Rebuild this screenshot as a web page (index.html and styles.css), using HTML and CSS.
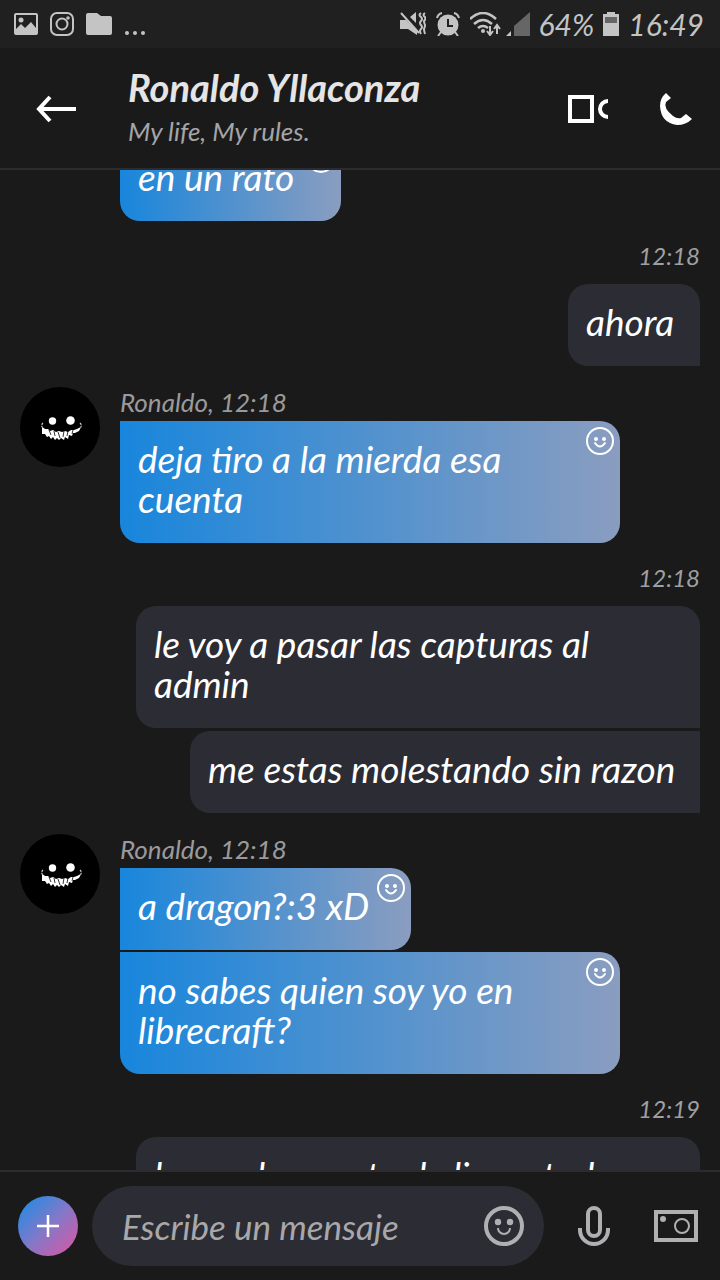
FILE: index.html
```html
<!DOCTYPE html>
<html lang="es">
<head>
<meta charset="utf-8">
<meta name="viewport" content="width=device-width, initial-scale=1">
<title>Ronaldo Yllaconza</title>
<link rel="stylesheet" href="styles.css">
</head>
<body>
<svg class="defs" aria-hidden="true">
  <symbol id="smile" viewBox="0 0 28 28">
    <circle cx="14" cy="14" r="13" fill="none" stroke="currentColor" stroke-width="2"/>
    <circle cx="10" cy="12" r="2" fill="currentColor"/><circle cx="18" cy="12" r="2" fill="currentColor"/>
    <path d="M9 16q5 7 10 0" fill="none" stroke="currentColor" stroke-width="2" stroke-linecap="round"/>
  </symbol>
  <symbol id="grin" viewBox="0 0 80 80">
    <circle cx="40" cy="40" r="40" fill="#000"/>
    <circle cx="32.500" cy="34" r="3.700" fill="#fff"/><circle cx="50.500" cy="33.500" r="4.300" fill="#fff"/>
    <path d="M23 36q-3 3 1 6M60 36q3 3-1 6" fill="none" stroke="#ccc" stroke-width="1.200" stroke-dasharray="2 1"/>
    <path d="M22 40l3 2 3 0 2 2 3-1 3 2 3-1 3 1 3-1 3 1 3-2 3 0 3-1 4-2-2 4-4 2-2 0-1 3-3-1-1 4-3-2-1 3-3-2-2 2-2-2-2 2-2-3-2 2-2-3-2 1-2-3-3 0z" fill="#fff"/>
    <path d="M29 43l2 5M34 44l1 5M38 45l2 6M43 50l1-6M47 49l1-5M52 47l1-4" stroke="#000" stroke-width=".8"/>
  </symbol>
</svg>
<div class="app">
  <div class="status">
    <div class="status-left">
      <svg width="24" height="24" viewBox="0 0 24 24"><path fill="currentColor" fill-rule="evenodd" d="M2 1h20q2 0 2 2v18q0 2-2 2H2q-2 0-2-2V3q0-2 2-2zM2 3v14l5-5 4 4 6-6 5 6V3z"/><circle cx="7" cy="8" r="2.500" fill="currentColor"/></svg>
      <svg width="24" height="24" viewBox="0 0 24 24" fill="none" stroke="currentColor" stroke-width="2"><rect x="1" y="1" width="22" height="22" rx="6"/><circle cx="12" cy="12" r="5.500"/><circle cx="18" cy="6" r=".8"/></svg>
      <svg width="26" height="24" viewBox="0 0 26 24"><path fill="currentColor" d="M2 1h9l4 3h9q2 0 2 2v15q0 2-2 2H2q-2 0-2-2V3q0-2 2-2z"/></svg>
      <svg width="22" height="24" viewBox="0 0 22 24" fill="currentColor"><circle cx="3" cy="21" r="2"/><circle cx="11" cy="21" r="2"/><circle cx="19" cy="21" r="2"/></svg>
    </div>
    <div class="status-right">
      <svg width="26" height="24" viewBox="0 0 26 24"><path fill="currentColor" d="M0 8h6l11 11v4l-9-6H0zM10 5l6-5v11z"/><path d="M1 1l18 20" stroke="currentColor" stroke-width="2"/><path d="M21 1q-3 2 0 4 2 2 0 4-2 2 0 4 2 2 0 4-2 2 0 5M25 1q-3 2 0 4 1 2-1 4 0 2 1 4 0 2-1 4 0 2 1 5" fill="none" stroke="currentColor" stroke-width="2"/></svg>
      <svg width="26" height="24" viewBox="0 0 26 24"><circle cx="13" cy="13" r="10.500" fill="currentColor"/><path d="M13 7v7h5" fill="none" stroke="#202020" stroke-width="2"/><path d="M2 6q1-4 5-5M19 1q4 1 5 5M6 20l-3 4M20 20l3 4" fill="none" stroke="currentColor" stroke-width="2"/></svg>
      <svg width="60" height="24" viewBox="0 0 60 24"><path d="M0 7q13-12 26 0M4 12q9-8 18 0M8 16q5-4 10 0" fill="none" stroke="currentColor" stroke-width="2.500"/><circle cx="13" cy="19" r="2" fill="currentColor"/><path d="M20 14v8M17 19l3 4 3-4M27 22v-8M24 17l3-4 3 4" fill="none" stroke="currentColor" stroke-width="2"/><path d="M41 19v5h-5z" fill="currentColor"/><path d="M60 0v24H44V14z" fill="#666"/></svg>
      <span>64%</span>
      <svg width="16" height="24" viewBox="0 0 16 24"><path fill="currentColor" d="M4 0h8v2h4v22H0V2h4z"/><path d="M2 5h12v6H2z" fill="#666"/></svg>
      <span>16:49</span>
    </div>
  </div>

  <header class="header">
    <button class="icon-btn" aria-label="Atrás"><svg width="40" height="28" viewBox="0 0 40 28" fill="none" stroke="currentColor" stroke-width="4"><path d="M40 14H3M14 2L3 14l11 12"/></svg></button>
    <div class="contact"><h1>Ronaldo Yllaconza</h1><p>My life, My rules.</p></div>
    <button class="icon-btn" aria-label="Videollamada"><svg width="40" height="28" viewBox="0 0 40 28" fill="none" stroke="currentColor" stroke-width="4"><path d="M2 2h22v24H2zM40 6a8 8 0 0 0 0 16"/></svg></button>
    <button class="icon-btn" aria-label="Llamar"><svg width="32" height="32" viewBox="0 0 32 32"><path fill="currentColor" d="M6 0Q0 5 0 13q1 17 17 19 9 0 15-6l-6-5-5 4q-4 1-8-2Q3 15 6 9l5-4z"/></svg></button>
  </header>

  <main class="chat">
    <section class="theirs first"><div class="stack"><p class="bubble size-s">en un rato<svg class="react"><use href="#smile"/></svg></p></div></section>
    <section class="mine"><time>12:18</time><p class="bubble size-xs">ahora</p></section>
    <section class="theirs">
      <svg class="avatar"><use href="#grin"/></svg>
      <div class="stack"><span class="who">Ronaldo, 12:18</span><p class="bubble">deja tiro a la mierda esa<br>cuenta<svg class="react"><use href="#smile"/></svg></p></div>
    </section>
    <section class="mine"><time>12:18</time><p class="bubble size-full">le voy a pasar las capturas al<br>admin</p><p class="bubble size-l">me estas molestando sin razon</p></section>
    <section class="theirs">
      <svg class="avatar"><use href="#grin"/></svg>
      <div class="stack"><span class="who">Ronaldo, 12:18</span><p class="bubble size-m">a dragon?:3 xD<svg class="react"><use href="#smile"/></svg></p><p class="bubble">no sabes quien soy yo en<br>librecraft?<svg class="react"><use href="#smile"/></svg></p></div>
    </section>
    <section class="mine"><time>12:19</time><p class="bubble size-full">le puedo cuenta de lien a todos</p></section>
  </main>

  <footer class="composer">
    <button class="plus" aria-label="Añadir"><svg width="22" height="22" viewBox="0 0 22 22"><path d="M11 0v22M0 11h22" stroke="currentColor" stroke-width="2.500"/></svg></button>
    <div class="field">
      <input type="text" aria-label="Mensaje" placeholder="Escribe un mensaje">
      <button class="icon-btn" aria-label="Emoticonos"><svg width="40" height="40" viewBox="0 0 40 40"><circle cx="20" cy="20" r="18" fill="none" stroke="currentColor" stroke-width="4"/><circle cx="14" cy="16" r="3.200" fill="currentColor"/><circle cx="26" cy="16" r="3.200" fill="currentColor"/><path d="M14 22a6 6 0 0 0 12 0" fill="none" stroke="currentColor" stroke-width="2"/></svg></button>
    </div>
    <button class="icon-btn" aria-label="Grabar audio"><svg width="32" height="40" viewBox="0 0 32 40" fill="none" stroke="currentColor" stroke-width="4"><rect x="10" y="2" width="12" height="28" rx="6"/><path d="M2 22v2a14 14 0 0 0 28 0v-2"/></svg></button>
    <button class="icon-btn" aria-label="Cámara"><svg width="44" height="32" viewBox="0 0 44 32" fill="none" stroke="currentColor"><rect x="2" y="2" width="40" height="28" stroke-width="4"/><circle cx="28" cy="16" r="7" stroke-width="2"/><circle cx="9" cy="9" r="3" fill="currentColor" stroke="none"/></svg></button>
  </footer>
</div>
</body>
</html>
```
FILE: styles.css
```css
* { box-sizing: border-box; margin: 0; }
body {
  background: #1a1a1b;
  color: #fff;
  font: italic 37px/40px Lato, "Open Sans", sans-serif;
}
svg { display: block; flex: none; }
.defs { position: absolute; width: 0; height: 0; }
button, input { font: inherit; color: inherit; background: none; border: 0; padding: 0; }
.app { display: flex; flex-direction: column; height: 100vh; overflow: hidden; }

.status {
  display: flex; flex: none; align-items: center; justify-content: space-between;
  height: 48px; padding: 0 16px 0 14px;
  background: #202020; color: #c4c4c4;
  font-size: 30px; line-height: 48px;
}
.status-left { display: flex; gap: 12px; }
.status-right { display: flex; align-items: center; gap: 9px; }

.header {
  display: flex; flex: none; align-items: center; gap: 52px;
  height: 122px; padding: 2px 28px 0 36px;
  border-bottom: 2px solid #2c2c2f;
}
.contact { flex: 1; min-width: 0; }
h1 { font-size: 38px; line-height: 44px; color: #e5e5e6; white-space: nowrap; }
.contact p { font-size: 26px; line-height: 44px; color: #a5a5a7; }

.chat {
  display: flex; flex: 1; flex-direction: column; gap: 20px;
  min-height: 0; padding: 0 20px; overflow: hidden;
}
.theirs { display: flex; flex: none; align-items: flex-start; gap: 20px; margin-top: 1px; }
.theirs.first { margin-top: -31px; padding-left: 100px; }
.avatar { width: 80px; height: 80px; }
.stack { display: flex; flex: 1; flex-direction: column; align-items: flex-start; gap: 2px; }
.who { margin-bottom: 2px; font-size: 26px; line-height: 30px; color: #9a9a9c; }
.mine { display: flex; flex: none; flex-direction: column; align-items: flex-end; gap: 3px; }
.mine time { margin-bottom: 10px; font-size: 24px; line-height: 30px; color: #a0a0a2; }

.bubble { padding: 18px 22px 24px 18px; border-radius: 20px; white-space: nowrap; }
.theirs .bubble {
  position: relative; width: 100%; max-width: 500px;
  background: linear-gradient(90deg, #1886dc, #8a9dc0);
  border-top-left-radius: 0;
}
.theirs .bubble:not(:last-child) { border-bottom-left-radius: 0; }
.mine .bubble { background: #2c2c34; border-bottom-right-radius: 0; }
.mine .bubble + .bubble { border-top-right-radius: 0; }
.react { position: absolute; top: 6px; right: 6px; width: 28px; height: 28px; }
.bubble.size-xs { width: 132px; }
.theirs .bubble.size-s { width: 221px; }
.theirs .bubble.size-m { width: 291px; }
.bubble.size-l { width: 510px; }
.bubble.size-full { width: 564px; max-width: 100%; }

.composer {
  display: flex; flex: none; align-items: center;
  height: 110px; padding: 0 22px 0 18px;
  border-top: 2px solid #2c2c2f; color: #b0b0b2;
}
.plus {
  display: grid; flex: none; place-items: center; width: 60px; height: 60px;
  border-radius: 50%; color: #fff;
  background: linear-gradient(135deg, #1e8ce6 5%, #8278c8 50%, #e055a0);
}
.field {
  display: flex; flex: 1; align-items: center; min-width: 0; height: 80px;
  margin: 0 34px 0 14px; padding: 0 20px 0 30px;
  border-radius: 40px; background: #2c2c34;
}
.field input { flex: 1; min-width: 0; outline: none; font-size: 35px; }
.field input::placeholder { color: #a8a8aa; opacity: 1; }
.composer > .icon-btn + .icon-btn { margin-left: 44px; }
```
